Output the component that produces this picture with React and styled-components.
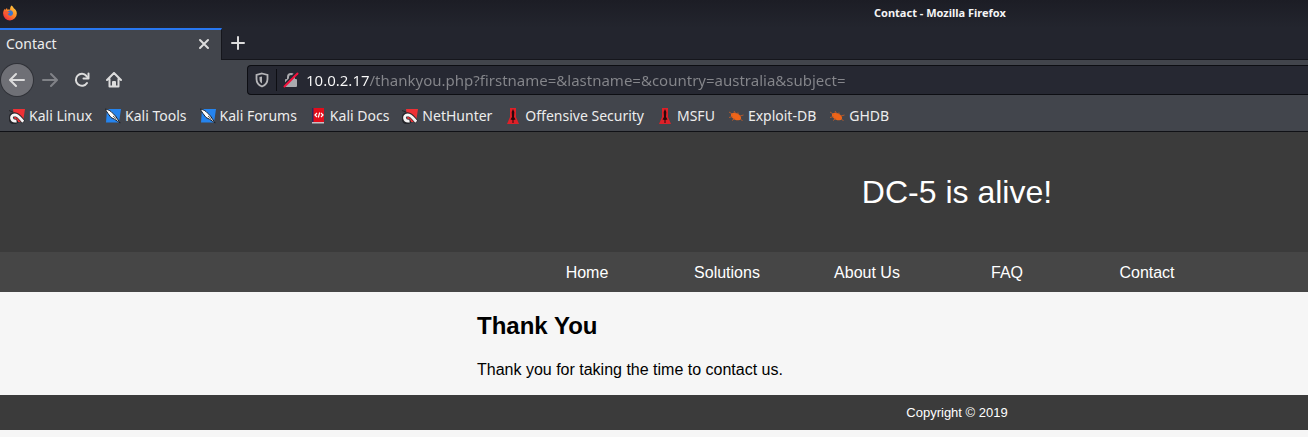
import React from 'react';
import styled, { createGlobalStyle } from 'styled-components';

const GlobalStyle = createGlobalStyle`
  * { box-sizing: border-box; }
  body { margin: 0; background: #f6f6f6; overflow: hidden; }
  button, input { font: inherit; }
`;

const Browser = styled.div`
  font: 14px/20px "Noto Sans", sans-serif;
  color: #ededed;
`;

const TitleBar = styled.header`
  display: flex;
  align-items: center;
  height: 28px;
  padding: 0 0 2px 2px;
  background: linear-gradient(#1c1d25, #23252e);
`;

const WindowTitle = styled.div`
  flex: none;
  margin-left: 856px;
  font-size: 11px;
  line-height: 16px;
  font-weight: 700;
  color: #f4f4f4;
`;

const TabStrip = styled.div`
  display: flex;
  height: 32px;
  background: #23252e;
  box-shadow: inset 0 -1px #15161c;
`;

const Tab = styled.div`
  display: flex;
  align-items: center;
  justify-content: space-between;
  width: 222px;
  padding: 0 9px 2px 6px;
  border-top: 2px solid #2877f0;
  border-right: 1px solid #15161c;
  background: #42454c;
`;

const IconButton = styled.button`
  display: grid;
  place-items: center;
  flex: none;
  width: 32px;
  height: 32px;
  padding: 0;
  border: 0;
  border-radius: 50%;
  background: none;
  color: ${(p) => (p.$dim ? '#808287' : '#dcdcdc')};
`;

const CloseButton = styled(IconButton)`
  width: 16px;
  height: 16px;
`;

const NewTabButton = styled(IconButton)`
  height: 30px;
`;

const BackButton = styled(IconButton)`
  margin-right: 1px;
  background: #6f7076;
  box-shadow: 0 0 0 1px #303238;
`;

const Toolbar = styled.div`
  display: flex;
  align-items: center;
  height: 40px;
  padding-left: 1px;
  background: #42454c;
`;

const NavButtons = styled.div`
  display: flex;
  width: 246px;
  flex: none;
`;

const AddressBar = styled.div`
  display: flex;
  align-items: center;
  flex: 1;
  height: 30px;
  padding-left: 6px;
  border: 1px solid #0d0e13;
  border-right: 0;
  border-radius: 4px 0 0 4px;
  background: #262832;
  font-size: 15px;
`;

const Divider = styled.span`
  width: 1px;
  height: 22px;
  margin: 0 6px;
  background: #0d0e13;
`;

const UrlInput = styled.input`
  flex: 1;
  min-width: 0;
  margin-left: 7px;
  padding: 0;
  border: 0;
  outline: 0;
  color: transparent;
  caret-color: #ffffff;
  background: linear-gradient(90deg, #fbfbfb 63px, #85868b 63px);
  background-clip: text;
`;

const Bookmarks = styled.nav`
  display: flex;
  align-items: center;
  gap: 13px;
  height: 32px;
  padding: 1px 0 0 9px;
  border-bottom: 1px solid #101116;
  background: #42454c;
`;

const Bookmark = styled.a`
  display: flex;
  align-items: center;
  gap: 4px;
  flex: none;
  color: inherit;
  text-decoration: none;
  white-space: nowrap;
`;

const Site = styled.div`
  font: 16px/20px "Liberation Sans", Arial, sans-serif;
  color: #000000;
  overflow: hidden;
`;

const Band = styled.div`
  padding-left: 477px;
  background: ${(p) => p.$tone || 'none'};
`;

const Column = styled.div`
  width: 960px;
`;

const Banner = styled(Column)`
  padding: 40px 0;
  font-size: 32px;
  line-height: 40px;
  text-align: center;
  color: #ffffff;
`;

const Menu = styled(Column)`
  display: flex;
  padding-left: 40px;
`;

const MenuLink = styled.a`
  width: 140px;
  padding: 11px 0 9px;
  text-align: center;
  color: #ffffff;
  text-decoration: none;
`;

const Article = styled(Column)`
  padding: 20px 0 15px;
`;

const Heading = styled.h2`
  margin: 0 0 20px;
  font-size: 24px;
  line-height: 28px;
`;

const Text = styled.p`
  margin: 0;
`;

const Copyright = styled(Column)`
  font-size: 13px;
  line-height: 35px;
  text-align: center;
  color: #ffffff;
`;

const Line = ({ children, size = 16, width = 2 }) => (
  <svg width={size} height={size} viewBox="0 0 16 16" fill="none" stroke="currentColor"
    strokeWidth={width} strokeLinecap="round" strokeLinejoin="round" aria-hidden="true">
    {children}
  </svg>
);

const FirefoxLogo = () => (
  <svg width="16" height="16" viewBox="0 0 16 16" aria-hidden="true">
    <defs>
      <linearGradient id="fox" x1="1" y1="0" x2="0.2" y2="1">
        <stop offset="0" stopColor="#ffe04a" />
        <stop offset="0.5" stopColor="#ff8a25" />
        <stop offset="1" stopColor="#f0283f" />
      </linearGradient>
    </defs>
    <path d="M9.6.5c1 1 1.8 1.7 2.2 2.8 1.9 1 3 3 3 5.2A6.9 6.9 0 0 1 8 15.400 6.900 6.900 0 0 1 1.100 8.500c0-1.900.6-3.600 1.600-4.800l.3 1.200L5 3l.4 1.700c1-.4 2-.3 2.700.1C8 3 8.500 1.500 9.600.5Z" fill="url(#fox)" />
    <path d="M5.400 6.400 8 5.300c2 .2 3.200 1.600 3 3.300-.2 1.600-1.600 2.700-3.200 2.500C6.300 11 5.200 10 5 8.700l2.300-.6Z" fill="#3975ce" />
    <path d="M2.500 6.200c1-.8 2.500-.5 3.300.5l1.900.3c-.1.900-1 1.200-1.900 1.400 0 1.400 1.200 2 2.700 1.700-1.300 1.900-4.800 1.400-6-3.900Z" fill="#f65b32" />
  </svg>
);

const KaliIcon = () => (
  <svg width="16" height="16" viewBox="0 0 16 16" aria-hidden="true">
    <path d="M4 1h12l-2 13H6Z" fill="#ee3035" />
    <path d="M8.500 12.500 5 14.500C.5 13 1 6.500 5.500 6.500c4 0 6 4 9 7.500" fill="none" stroke="#25262b" strokeWidth="4.400" />
    <path d="M7.500 13C1.500 14 1 7 5.500 6.800c4 0 6 4 8.700 7" fill="none" stroke="#f7f5f5" strokeWidth="2.800" />
    <path d="m0 2.500 4 1.500" stroke="#25262b" />
  </svg>
);

const ToolsIcon = () => (
  <svg width="16" height="16" viewBox="0 0 16 16" aria-hidden="true">
    <path d="M2 1h14l-2 13.500H1Z" fill="#2584ee" />
    <path d="M0 1c3 .5 5.500 1.500 8 4.500L10.500 8l4.700 7-5.700-3.800L6 9.500 3 5.500Z" fill="#fff" stroke="#20242c" strokeWidth="1" />
    <path d="m8 8 3.500 3" stroke="#252a32" strokeWidth=".8" />
  </svg>
);

const DocsIcon = () => (
  <svg width="16" height="16" viewBox="0 0 16 16" aria-hidden="true">
    <path d="M2 0h12v15H2Z" fill="#e30d1b" />
    <path d="M2 0h1.500v14H2Z" fill="#292c61" />
    <path d="M2 14h12v1.500H2Z" fill="#c9bfc4" />
    <path d="M7 5 5 7l2 2M11 5l2 2-2 2M9.700 4.500l-1.400 5" fill="none" stroke="#fff" strokeWidth="1.200" />
  </svg>
);

const OffsecIcon = () => (
  <svg width="16" height="16" viewBox="0 0 16 16" aria-hidden="true">
    <path d="M5 0h6v9l3 7H2l3-7Z" fill="#df2028" />
    <path d="m8 1 1.300 3L9 9l1.500 2.500-2 .5v3h-1v-3l-2-.5L7 9l-.3-5Z" fill="#27080b" />
  </svg>
);

const BugIcon = () => (
  <svg width="16" height="16" viewBox="0 0 16 16" aria-hidden="true">
    <ellipse cx="8" cy="8.500" rx="5.500" ry="3.300" transform="rotate(27 8 8.500)" fill="#ef6418" />
    <path d="m1 4 4 2.500M1 9.500 5 8.500M4 12.500l3-2M6 3l2 3M10 4.500v2M12 8l3.500-1M12 10.500l2.500 2.500" fill="none" stroke="#c95f28" strokeWidth=".8" />
  </svg>
);

const ShieldIcon = () => (
  <svg width="16" height="16" viewBox="0 0 16 16" aria-hidden="true">
    <path d="M8 1.500 13.500 3v4c0 3.800-2.200 6.200-5.500 7.500C4.700 13.200 2.500 10.800 2.500 7V3Z" fill="none" stroke="#b5b5b8" strokeWidth="1.800" />
    <path d="M8 4.500 5.500 5v2c0 2 .8 3.500 2.500 4.500Z" fill="#b5b5b8" />
  </svg>
);

const InsecureIcon = () => (
  <svg width="16" height="16" viewBox="0 0 16 16" aria-hidden="true">
    <path d="M5 8V5a3 3 0 0 1 6 0v3" fill="none" stroke="#aaaaae" strokeWidth="2" />
    <rect x="2" y="7" width="12" height="8" rx="1" fill="#aaaaae" />
    <path d="M.5 13.500 13.500 0" stroke="#262832" strokeWidth="2" />
    <path d="M1.500 14.500 14.500 1.500" stroke="#f5103c" strokeWidth="2" strokeLinecap="round" />
  </svg>
);

const bookmarks = [
  ['Kali Linux', KaliIcon],
  ['Kali Tools', ToolsIcon],
  ['Kali Forums', ToolsIcon],
  ['Kali Docs', DocsIcon],
  ['NetHunter', KaliIcon],
  ['Offensive Security', OffsecIcon],
  ['MSFU', OffsecIcon],
  ['Exploit-DB', BugIcon],
  ['GHDB', BugIcon],
];

const pages = ['Home', 'Solutions', 'About Us', 'FAQ', 'Contact'];

export default function App() {
  return (
    <>
      <GlobalStyle />
      <Browser>
        <TitleBar>
          <FirefoxLogo />
          <WindowTitle>Contact - Mozilla Firefox</WindowTitle>
        </TitleBar>
        <TabStrip>
          <Tab>
            <span>Contact</span>
            <CloseButton aria-label="Close tab">
              <Line><path d="m4 4 8 8M12 4l-8 8" /></Line>
            </CloseButton>
          </Tab>
          <NewTabButton aria-label="New tab">
            <Line><path d="M8 2v12M2 8h12" /></Line>
          </NewTabButton>
        </TabStrip>
        <Toolbar>
          <NavButtons>
            <BackButton aria-label="Back">
              <Line><path d="M15 8H1.500M7 2 1 8l6 6" /></Line>
            </BackButton>
            <IconButton $dim aria-label="Forward">
              <Line><path d="M1 8h13.500M9 2l6 6-6 6" /></Line>
            </IconButton>
            <IconButton aria-label="Reload">
              <Line><path d="M13 11a6 6 0 1 1-.5-7L14 6" /><path d="M14.500 1.500V6.500H9.500" /></Line>
            </IconButton>
            <IconButton aria-label="Home">
              <Line><path d="M1 8 8 1l7 7M3.500 7v7.500h9V7" /><path d="M7 14v-4h2v4" /></Line>
            </IconButton>
          </NavButtons>
          <AddressBar>
            <ShieldIcon />
            <Divider />
            <InsecureIcon />
            <UrlInput
              aria-label="Address"
              defaultValue="10.0.2.17/thankyou.php?firstname=&lastname=&country=australia&subject="
            />
          </AddressBar>
        </Toolbar>
        <Bookmarks aria-label="Bookmarks">
          {bookmarks.map(([name, Icon]) => (
            <Bookmark key={name} href="#">
              <Icon />
              {name}
            </Bookmark>
          ))}
        </Bookmarks>
      </Browser>
      <Site>
        <Band $tone="#3b3b3b"><Banner>DC-5 is alive!</Banner></Band>
        <Band as="nav" $tone="#464646">
          <Menu>
            {pages.map((page) => <MenuLink key={page} href="#">{page}</MenuLink>)}
          </Menu>
        </Band>
        <Band as="main">
          <Article>
            <Heading>Thank You</Heading>
            <Text>Thank you for taking the time to contact us.</Text>
          </Article>
        </Band>
        <Band as="footer" $tone="#3b3b3b"><Copyright>Copyright © 2019</Copyright></Band>
      </Site>
    </>
  );
}
